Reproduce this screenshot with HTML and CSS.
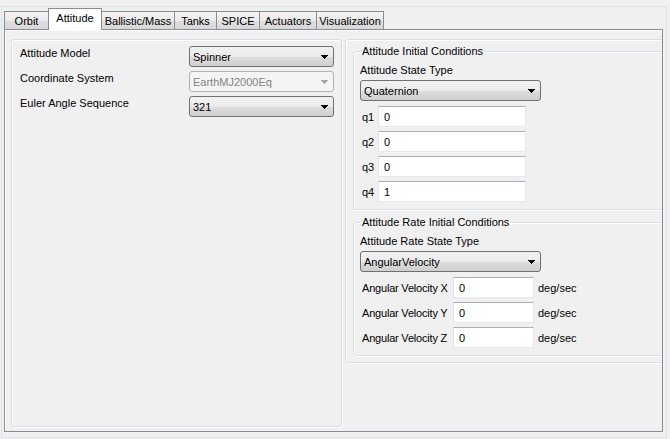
FILE: index.html
```html
<!DOCTYPE html>
<html>
<head>
<meta charset="utf-8">
<title>Attitude</title>
<link rel="stylesheet" href="styles.css">
</head>
<body>
<div class="frame">
  <div class="tabs">
    <div class="tab">Orbit</div>
    <div class="tab active">Attitude</div>
    <div class="tab">Ballistic/Mass</div>
    <div class="tab">Tanks</div>
    <div class="tab">SPICE</div>
    <div class="tab">Actuators</div>
    <div class="tab">Visualization</div>
  </div>
  <div class="pane">
    <div class="panel left">
      <div class="form">
        <div class="lbl">Attitude Model</div>
        <div class="combo"><span>Spinner</span><svg class="arrow" width="7" height="4" viewBox="0 0 7 4"><path d="M0 0h7v1H0zM1 1h5v1H1zM2 2h3v1H2zM3 3h1v1H3z"/></svg></div>
        <div class="lbl">Coordinate System</div>
        <div class="combo disabled"><span>EarthMJ2000Eq</span><svg class="arrow" width="7" height="4" viewBox="0 0 7 4"><path d="M0 0h7v1H0zM1 1h5v1H1zM2 2h3v1H2zM3 3h1v1H3z"/></svg></div>
        <div class="lbl">Euler Angle Sequence</div>
        <div class="combo"><span>321</span><svg class="arrow" width="7" height="4" viewBox="0 0 7 4"><path d="M0 0h7v1H0zM1 1h5v1H1zM2 2h3v1H2zM3 3h1v1H3z"/></svg></div>
      </div>
    </div>
    <div class="panel right">
      <fieldset class="group">
        <legend>Attitude Initial Conditions</legend>
        <div class="caption">Attitude State Type</div>
        <div class="combo wide"><span>Quaternion</span><svg class="arrow" width="7" height="4" viewBox="0 0 7 4"><path d="M0 0h7v1H0zM1 1h5v1H1zM2 2h3v1H2zM3 3h1v1H3z"/></svg></div>
        <div class="qgrid">
          <div class="lbl">q1</div><div class="input">0</div>
          <div class="lbl">q2</div><div class="input">0</div>
          <div class="lbl">q3</div><div class="input">0</div>
          <div class="lbl">q4</div><div class="input">1</div>
        </div>
      </fieldset>
      <fieldset class="group second">
        <legend>Attitude Rate Initial Conditions</legend>
        <div class="caption">Attitude Rate State Type</div>
        <div class="combo wide"><span>AngularVelocity</span><svg class="arrow" width="7" height="4" viewBox="0 0 7 4"><path d="M0 0h7v1H0zM1 1h5v1H1zM2 2h3v1H2zM3 3h1v1H3z"/></svg></div>
        <div class="vgrid">
          <div class="lbl">Angular Velocity X</div><div class="input">0</div><div class="unit">deg/sec</div>
          <div class="lbl">Angular Velocity Y</div><div class="input">0</div><div class="unit">deg/sec</div>
          <div class="lbl">Angular Velocity Z</div><div class="input">0</div><div class="unit">deg/sec</div>
        </div>
      </fieldset>
    </div>
  </div>
</div>
</body>
</html>
```

FILE: styles.css
```css
* { box-sizing: border-box; }

html, body {
  margin: 0;
  padding: 0;
  background: #f0f0f0;
  font-family: "Liberation Sans", Arial, sans-serif;
  font-size: 11px;
  line-height: 14px;
  color: #000;
}

.frame {
  margin: 6px 3px 1px 1px;
  height: 432px;
  border: 1px solid #dae2ea;
  padding: 2px 3px 5px 2px;
  display: flex;
  flex-direction: column;
}

.tabs {
  display: flex;
  align-items: flex-end;
  height: 20px;
  position: relative;
  z-index: 2;
}

.tab {
  height: 18px;
  border: 1px solid #898c95;
  border-bottom: none;
  margin-right: -1px;
  background: linear-gradient(#f3f3f3 0%, #ebebeb 50%, #dedede 51%, #d8d8d8 100%);
  display: flex;
  align-items: center;
  justify-content: center;
  padding-top: 1px;
  white-space: nowrap;
}

.tab:nth-child(1) { width: 45px; }
.tab:nth-child(2) { width: 54px; }
.tab:nth-child(3) { width: 74px; }
.tab:nth-child(4) { width: 43px; }
.tab:nth-child(5) { width: 44px; }
.tab:nth-child(6) { width: 58px; }
.tab:nth-child(7) { width: 68px; }

.tab.active {
  height: 22px;
  margin-bottom: -1px;
  background: #fff;
  position: relative;
  z-index: 3;
  align-items: flex-start;
  padding-top: 2px;
}

.pane {
  flex: 1;
  border: 1px solid #898c95;
  box-shadow: inset 1px 1px 0 #fff;
  padding: 9px 0 4px 6px;
  display: flex;
  gap: 3px;
  overflow: hidden;
  position: relative;
  z-index: 1;
}

.panel {
  border: 1px solid #d5dfe5;
  border-radius: 3px;
  box-shadow: 1px 1px 0 #fff, inset 1px 1px 0 #fff;
}

.panel.left {
  width: 331px;
  flex-shrink: 0;
  padding: 6px 7px 0 8px;
}

.panel.right {
  width: 330px;
  flex-shrink: 0;
  align-self: flex-start;
  padding: 5px 0 6px 7px;
}

.form {
  display: grid;
  grid-template-columns: 1fr 145px;
  row-gap: 4px;
}

.form .lbl { align-self: start; }

.combo {
  height: 21px;
  border: 1px solid #707070;
  border-radius: 3px;
  background: linear-gradient(#f2f2f2 0%, #ebebeb 50%, #dddddd 51%, #cfcfcf 100%);
  display: flex;
  align-items: center;
  justify-content: space-between;
  padding: 0 5px 0 3px;
}

.combo .arrow { fill: #000; display: block; }

.combo.disabled {
  border-color: #adb2b5;
  background: #f4f4f4;
  color: #838383;
}

.combo.disabled .arrow { fill: #a6a6a6; }

.combo.wide { width: 181px; }

.group {
  margin: 0;
  border: 1px solid #d5dfe5;
  border-radius: 3px;
  box-shadow: 1px 1px 0 #fff, inset 1px 1px 0 #fff;
  padding: 5px 0 7px 6px;
  min-width: 0;
}

.group.second { margin-top: 6px; }

.group legend {
  padding: 0 2px;
  margin: 0;
  line-height: 13px;
}

.caption { margin-bottom: 3px; }

.qgrid {
  display: grid;
  grid-template-columns: 18px 148px;
  row-gap: 4px;
  margin-top: 5px;
}

.vgrid {
  display: grid;
  grid-template-columns: 89px 81px auto;
  column-gap: 4px;
  row-gap: 4px;
  margin-top: 5px;
}

.qgrid .lbl, .vgrid .lbl {
  padding-left: 2px;
  align-self: center;
  white-space: nowrap;
}

.vgrid .lbl { letter-spacing: -0.2px; }

.unit { align-self: center; }

.input {
  height: 21px;
  background: #fff;
  border: 1px solid #e3e9ef;
  border-top-color: #abadb3;
  border-left-color: #e2e3ea;
  padding-left: 5px;
  display: flex;
  align-items: center;
}
```
